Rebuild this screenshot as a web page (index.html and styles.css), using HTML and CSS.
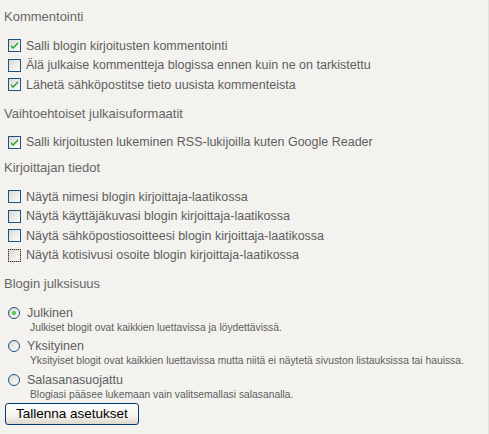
FILE: index.html
```html
<!DOCTYPE html>
<html lang="fi">
<head>
  <meta charset="UTF-8" />
  <title>Blogin asetukset</title>
  <link rel="stylesheet" href="styles.css">
</head>
<body>
  <div class="settings">
    <!-- Kommentointi -->
    <div class="section">
      <h3>Kommentointi</h3>
      <label class="row"><span class="box"><svg viewBox="0 0 7 7" width="7" height="7"><polygon points="0,3 2,5 7,0 7,2 2,7 0,5" fill="#21a121"/></svg></span>Salli blogin kirjoitusten kommentointi</label>
      <label class="row"><span class="box"></span>Älä julkaise kommentteja blogissa ennen kuin ne on tarkistettu</label>
      <label class="row"><span class="box"><svg viewBox="0 0 7 7" width="7" height="7"><polygon points="0,3 2,5 7,0 7,2 2,7 0,5" fill="#21a121"/></svg></span>Lähetä sähköpostitse tieto uusista kommenteista</label>
    </div>

    <div class="section short">
      <h3>Vaihtoehtoiset julkaisuformaatit</h3>
      <label class="row"><span class="box"><svg viewBox="0 0 7 7" width="7" height="7"><polygon points="0,3 2,5 7,0 7,2 2,7 0,5" fill="#21a121"/></svg></span>Salli kirjoitusten lukeminen RSS-lukijoilla kuten Google Reader</label>
    </div>

    <div class="section">
      <h3>Kirjoittajan tiedot</h3>
      <label class="row"><span class="box"></span>Näytä nimesi blogin kirjoittaja-laatikossa</label>
      <label class="row"><span class="box"></span>Näytä käyttäjäkuvasi blogin kirjoittaja-laatikossa</label>
      <label class="row"><span class="box"></span>Näytä sähköpostiosoitteesi blogin kirjoittaja-laatikossa</label>
      <label class="row"><span class="box focus"></span>Näytä kotisivusi osoite blogin kirjoittaja-laatikossa</label>
    </div>

    <!-- Julkisuus -->
    <div class="section">
      <h3 class="before-radios">Blogin julksisuus</h3>
      <div class="choice">
        <label class="radio"><span class="circle"><span class="dot"></span></span>Julkinen</label>
        <div class="desc">Julkiset blogit ovat kaikkien luettavissa ja löydettävissä.</div>
      </div>
      <div class="choice">
        <label class="radio"><span class="circle"></span>Yksityinen</label>
        <div class="desc">Yksityiset blogit ovat kaikkien luettavissa mutta niitä ei näytetä sivuston listauksissa tai hauissa.</div>
      </div>
      <div class="choice last">
        <label class="radio"><span class="circle"></span>Salasanasuojattu</label>
        <div class="desc">Blogiasi pääsee lukemaan vain valitsemallasi salasanalla.</div>
      </div>
      <button class="save">Tallenna asetukset</button>
    </div>
  </div>
</body>
</html>
```

FILE: styles.css
```css
body {
  margin: 0;
  background: #f3f2ee;
  font-family: "Liberation Sans", Arial, sans-serif;
  color: #5e5e5e;
}

.settings {
  width: 489px;
  height: 434px;
  box-sizing: border-box;
  padding: 9px 0 0 4px;
  border-right: 1px solid #e2e1dc;
}

h3 {
  font-size: 13px;
  font-weight: normal;
  line-height: 16px;
  margin: 0 0 11px;
  color: #666;
}

h3.before-radios {
  margin-bottom: 13px;
}

.section {
  margin-bottom: 11px;
}

.section.short {
  margin-bottom: 8px;
}

.row {
  display: flex;
  align-items: center;
  gap: 5px;
  height: 19.5px;
  padding-left: 4px;
  font-size: 12.5px;
  white-space: nowrap;
}

.box {
  width: 13px;
  height: 13px;
  box-sizing: border-box;
  border: 1px solid #1c5180;
  background: linear-gradient(135deg, #d8d8d2, #fff);
  display: flex;
  align-items: center;
  justify-content: center;
  flex-shrink: 0;
}

.box.focus {
  border: 1px dotted #1f3a68;
  background: linear-gradient(135deg, #d8d8d2, #fff) padding-box, #e8a24a border-box;
}

.choice {
  margin-bottom: 4.3px;
}

.choice.last {
  margin-bottom: 2px;
}

.radio {
  display: flex;
  align-items: center;
  gap: 7px;
  height: 16px;
  padding-left: 4px;
  font-size: 12.5px;
}

.circle {
  width: 12px;
  height: 12px;
  box-sizing: border-box;
  border: 1px solid #1c5180;
  border-radius: 50%;
  background: linear-gradient(135deg, #d8d8d2, #fff);
  display: flex;
  align-items: center;
  justify-content: center;
}

.dot {
  width: 4px;
  height: 4px;
  border-radius: 50%;
  background: radial-gradient(circle, #6fdc6f, #1f9f1f);
}

.desc {
  font-size: 10.3px;
  line-height: 13px;
  padding-left: 26px;
  white-space: nowrap;
}

.save {
  margin-left: 1px;
  height: 22px;
  padding: 0 10px;
  font-family: "Liberation Sans", Arial, sans-serif;
  font-size: 13.5px;
  color: #000;
  border: 1px solid #003c74;
  border-radius: 3px;
  background: linear-gradient(#fff, #f4f3ee 60%, #dcd7cb);
}
```
